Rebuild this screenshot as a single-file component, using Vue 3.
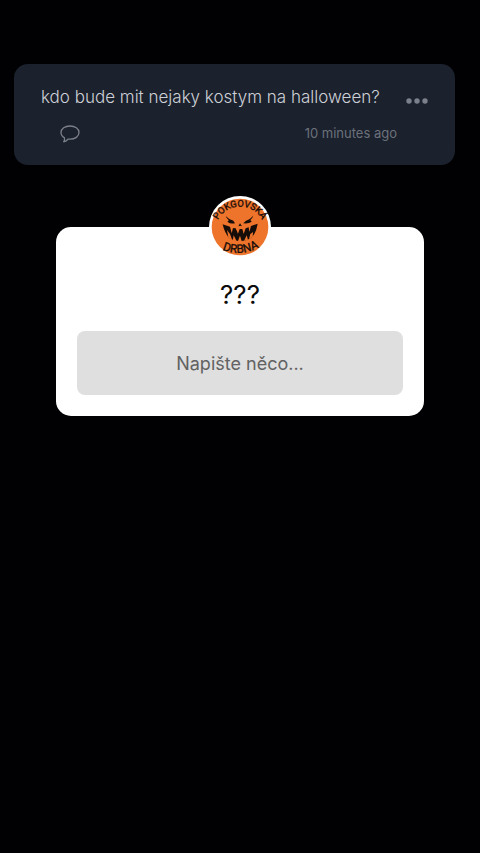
<script setup>
import { ref } from 'vue'

const answer = ref('')
</script>

<template>
  <main class="story">
    <article class="post">
      <div class="post-body">
        <p class="post-text">kdo bude mit nejaky kostym na halloween?</p>
        <div class="post-meta">
          <button class="icon-button" type="button" aria-label="Comment">
            <svg width="20" height="18" viewBox="0 0 20 18" fill="none">
              <path
                d="M10 1C5 1 1 3.700 1 7.600C1 9.900 2.300 11.700 4.500 12.900C4.700 14.400 4.400 15.800 3.700 16.800C5.600 16.500 7.100 15.500 8 14.100C8.600 14.200 9.300 14.200 10 14.200C15 14.200 19 11.500 19 7.600C19 3.700 15 1 10 1Z"
                stroke="currentColor"
                stroke-width="1.300"
                stroke-linejoin="round"
              />
            </svg>
          </button>
          <time class="post-time">10 minutes ago</time>
        </div>
      </div>
      <button class="icon-button more" type="button" aria-label="More">
        <svg width="24" height="6" viewBox="0 0 24 6" fill="currentColor">
          <circle cx="4" cy="3" r="2.700" />
          <circle cx="12" cy="3" r="2.700" />
          <circle cx="20" cy="3" r="2.700" />
        </svg>
      </button>
    </article>

    <form class="question" @submit.prevent>
      <svg class="avatar" viewBox="27 28 186 186" role="img" aria-label="Pokgovská drbna">
        <defs>
          <path id="arc-top" d="M48 114Q66 62 120 60Q174 62 192 114" />
          <path id="arc-bottom" d="M60 185Q120 216 184 178" />
        </defs>
        <circle cx="120" cy="121" r="93" fill="#fff" />
        <circle cx="120" cy="121" r="85" fill="#ee742c" />
        <g class="avatar-text">
          <text><textPath href="#arc-top" startOffset="50%">POKGOVSKÁ</textPath></text>
          <text class="avatar-text-large"><textPath href="#arc-bottom" startOffset="50%">DRBNA</textPath></text>
        </g>
        <g fill="#160c08">
          <path d="M77 88Q86 98 100 102L105 110Q91 113 82 105Q86 103 86 100Q80 96 77 88Z" />
          <path d="M160 86Q153 98 138 102L130 110Q146 112 155 105L151 100Q158 95 160 86Z" />
          <path d="M120 110L126 119L121 117L115 119Z" />
          <path d="M68 113L90 120L95 140L99 124L107 125L114 141L119 127L127 127L131 142L137 125L146 122L148 136L153 118L173 111Q169 137 156 152Q143 163 120 163Q97 163 85 151Q73 136 68 113Z" />
        </g>
        <g fill="#ee742c">
          <path d="M81 130L90 142L97 161L85 152Z" />
          <path d="M101 146L110 164L98 162Z" />
          <path d="M114 163L120 147L125 163Z" />
          <path d="M132 163L140 146L144 159Z" />
          <path d="M147 158L151 142L159 136L158 151Z" />
        </g>
      </svg>
      <label class="question-title" for="answer">???</label>
      <input id="answer" v-model="answer" class="answer" type="text" placeholder="Napište něco..." />
    </form>
  </main>
</template>

<style>
body {
  margin: 0;
  background: #010103;
}
</style>

<style scoped>
.story {
  box-sizing: border-box;
  min-height: 100vh;
  padding: 64px 25px 64px 14px;
  background: #010103;
  font-family: Inter, "Liberation Sans", sans-serif;
}

.post {
  display: flex;
  align-items: flex-start;
  padding: 21px 26px 21px 27px;
  border-radius: 14px;
  background: #1b212d;
}

.post-body {
  display: flex;
  flex: 1;
  flex-direction: column;
  gap: 14px;
}

.post-text {
  margin: 0;
  color: #cdd0d6;
  font-size: 17px;
  font-weight: 300;
  line-height: 24px;
}

.post-meta {
  display: flex;
  align-items: center;
  justify-content: space-between;
  height: 21px;
  padding: 0 8px 0 19px;
}

.icon-button {
  display: flex;
  padding: 0;
  border: 0;
  background: none;
  color: #7c808a;
  cursor: pointer;
}

.more {
  margin-top: 13px;
}

.post-time {
  color: #6c717b;
  font-size: 13px;
  line-height: 21px;
}

.question {
  display: flex;
  flex-direction: column;
  align-items: center;
  margin: 62px 31px 0 42px;
  padding: 0 21px 21px;
  border-radius: 15px;
  background: #fff;
}

.avatar {
  width: 62px;
  height: 62px;
  margin-top: -31px;
}

.avatar-text {
  fill: #160c08;
  stroke: #160c08;
  stroke-width: 1px;
  font-family: Roboto, sans-serif;
  font-size: 28px;
  font-weight: 400;
  text-anchor: middle;
}

.avatar-text-large {
  font-size: 35px;
}

.question-title {
  margin: 20px 0;
  color: #0b0b0b;
  font-size: 26px;
  line-height: 33px;
}

.answer {
  box-sizing: border-box;
  width: 100%;
  height: 64px;
  padding: 0 16px;
  border: 0;
  border-radius: 8px;
  background: #dfdfdf;
  color: #333;
  font-family: inherit;
  font-size: 18px;
  text-align: center;
}

.answer::placeholder {
  color: #626262;
  opacity: 1;
}
</style>
